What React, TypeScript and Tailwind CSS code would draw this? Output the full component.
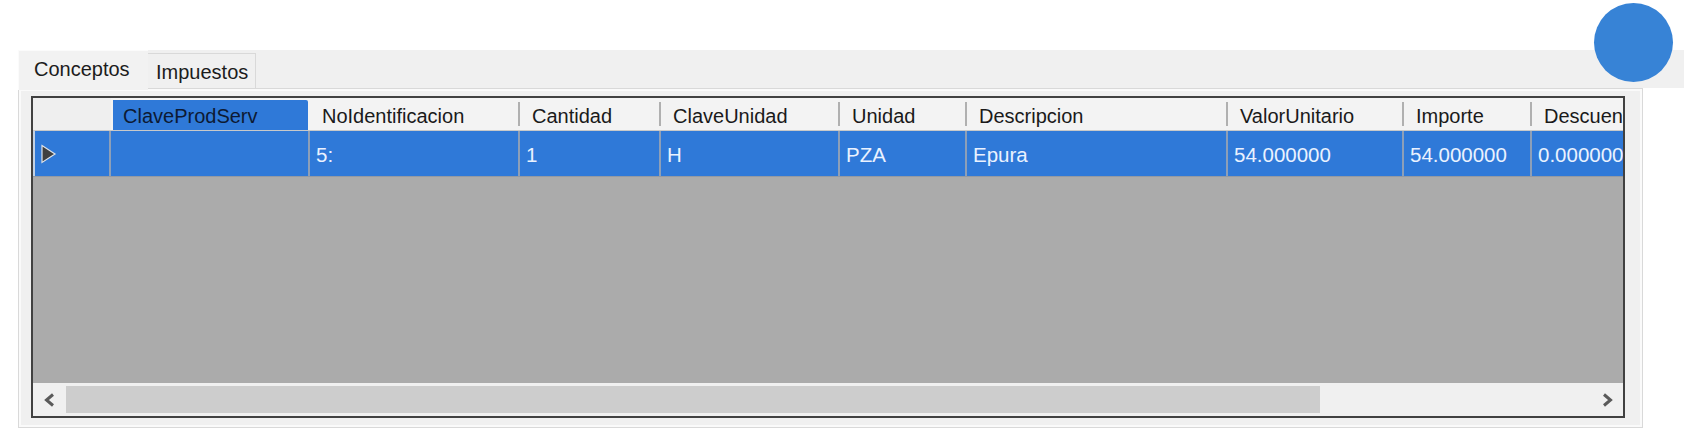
import React from "react";

type Col = { name: string; w: string; val: string };

const cols: Col[] = [
  { name: "NoIdentificacion", w: "w-[210px]", val: "5:" },
  { name: "Cantidad", w: "w-[141px]", val: "1" },
  { name: "ClaveUnidad", w: "w-[179px]", val: "H" },
  { name: "Unidad", w: "w-[127px]", val: "PZA" },
  { name: "Descripcion", w: "w-[261px]", val: "Epura" },
  { name: "ValorUnitario", w: "w-[176px]", val: "54.000000" },
  { name: "Importe", w: "w-[128px]", val: "54.000000" },
];

function Chevron({ dir }: { dir: "left" | "right" }) {
  return (
    <svg width="14" height="14" viewBox="0 0 14 14">
      <polyline
        points={dir === "left" ? "10,1.5 3.5,7 10,12.5" : "4,1.5 10.5,7 4,12.5"}
        fill="none"
        stroke="#5a5a5a"
        strokeWidth="3"
        strokeLinejoin="miter"
      />
    </svg>
  );
}

export default function App() {
  return (
    <div className="relative w-[1684px] h-[440px] bg-white overflow-hidden font-['Liberation_Sans',Arial,sans-serif] text-[20px]">
      <div className="pt-[50px] pl-[18px]">
        {/* tab strip */}
        <div className="flex items-start h-[38px] bg-[#f0f0f0]">
          <div className="relative z-10 w-[130px] h-[40px] bg-[#f2f2f2] border-l border-t border-[#fbfbfb] pl-[15px] pt-[7px] leading-[23px] text-[#1c1c1c]">
            Conceptos
          </div>
          <div className="mt-[3px] w-[108px] h-[35px] border-t border-r border-[#d9d9d9] bg-[#f0f0f0] pl-[8px] pt-[7px] leading-[23px] text-[#1c1c1c]">
            Impuestos
          </div>
        </div>
        {/* tab body */}
        <div className="w-[1625px] h-[340px] border border-[#d9d9d9] bg-[#f0f0f0] shadow-[inset_0_0_0_2px_#fafafa] pl-[12px] pt-[7px]">
          {/* data grid */}
          <div className="w-[1594px] h-[322px] border-2 border-[#414141] flex flex-col overflow-hidden">
            {/* header */}
            <div className="flex h-[33px] shrink-0 bg-[#f3f3f3] border-b border-[#c9c9c9] text-[#1a1a1a]">
              <div className="w-[78px] shrink-0 bg-[#efefef]" />
              <div className="w-[199px] shrink-0 flex pl-[2px] pt-[2px] pr-[2px]">
                <div className="flex-1 bg-[#2f79d8] rounded-tr-[2px] flex items-center pl-[10px] pt-[2px] text-[#0d1a33]">
                  ClaveProdServ
                </div>
              </div>
              {cols.map((c) => (
                <div key={c.name} className={`${c.w} shrink-0 flex items-center`}>
                  <span className="flex-1 pl-[12px] pt-[3px] whitespace-nowrap">{c.name}</span>
                  <div className="w-[2px] h-[24px] bg-[#b0b0b0]" />
                </div>
              ))}
              <div className="flex-1 flex items-center overflow-hidden">
                <span className="pl-[12px] pt-[3px] whitespace-nowrap">Descuento</span>
              </div>
            </div>
            {/* data row */}
            <div className="flex h-[46px] shrink-0 bg-[#2f79d8] border-b border-[#939aa4] text-[#eaf2ff] text-[20.5px]">
              <div className="w-[78px] shrink-0 border-l-[2px] border-[#c4d2e4] border-r-2 border-r-[#8d9fb8] flex items-center pl-[5px] pt-[1px]">
                <svg width="17" height="20" viewBox="0 0 17 20">
                  <polygon points="2,1.5 15,10 2,18.5" fill="#404040" stroke="#dfe3e8" strokeWidth="1.2" />
                </svg>
              </div>
              <div className="w-[199px] shrink-0 border-r-2 border-[#8d9fb8]" />
              {cols.map((c) => (
                <div
                  key={c.name}
                  className={`${c.w} shrink-0 border-r-2 border-[#8d9fb8] flex items-center pl-[6px] pt-[4px] whitespace-nowrap overflow-hidden`}
                >
                  {c.val}
                </div>
              ))}
              <div className="flex-1 flex items-center pl-[6px] pt-[4px] whitespace-nowrap overflow-hidden">
                0.000000
              </div>
            </div>
            {/* empty area */}
            <div className="flex-1 bg-[#ababab]" />
            {/* horizontal scrollbar */}
            <div className="h-[33px] shrink-0 bg-[#f0f0f0] flex pt-[3px] pb-[3px]">
              <div className="w-[33px] shrink-0 flex items-center justify-center">
                <Chevron dir="left" />
              </div>
              <div className="w-[1254px] shrink-0 bg-[#cdcdcd]" />
              <div className="flex-1" />
              <div className="w-[33px] shrink-0 flex items-center justify-center">
                <Chevron dir="right" />
              </div>
            </div>
          </div>
        </div>
      </div>
      {/* floating circle */}
      <div className="absolute left-[1594px] top-[3px] w-[79px] h-[79px] rounded-full bg-[#3783d6]" />
    </div>
  );
}
